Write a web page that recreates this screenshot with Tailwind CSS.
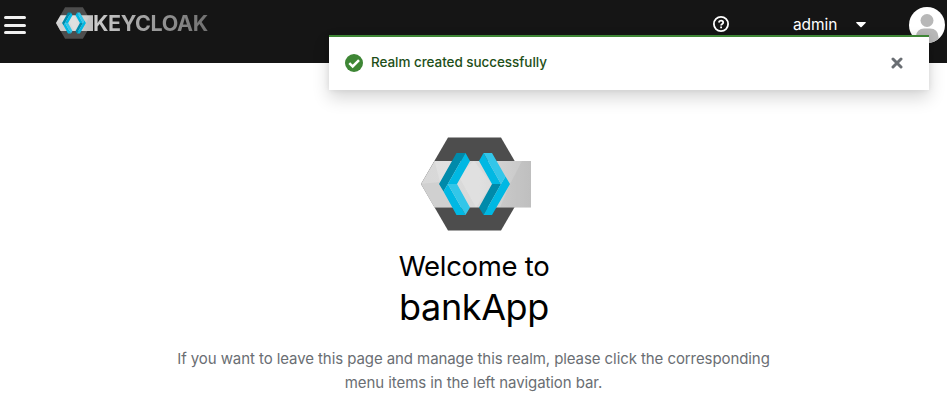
<!DOCTYPE html>
<html lang="en">
<head>
<meta charset="utf-8">
<title>Keycloak Administration Console</title>
<script src="https://cdn.jsdelivr.net/npm/@tailwindcss/browser@4"></script>
</head>
<body class="relative h-[412px] overflow-hidden bg-white font-['Inter',sans-serif]">
<svg class="absolute size-0">
  <defs>
    <linearGradient id="band" x1="0" x2="1"><stop offset="0" stop-color="#d8d8d8"/><stop offset=".5" stop-color="#dadada"/><stop offset="1" stop-color="#c6c6c6"/></linearGradient>
  </defs>
  <symbol id="emblem" viewBox="11 7 110 94">
    <path fill="#4d4d4d" d="M38 7.5H91L118 54 91 100.5H38L11 54Z"/>
    <path fill="url(#band)" d="M24.5 31H121V77.5H24.5L11 54Z"/>
    <path fill="#b8b8b8" fill-opacity=".25" d="M11 54 30 52 24.5 77.5ZM30 52 48 77.5H24.5Z"/>
    <path fill="#fff" fill-opacity=".18" d="M24.5 31H45L30 52ZM48 45 64 31 82 54 66 77.5Z"/>
    <path fill="#999" fill-opacity=".15" d="M100 54 121 60V77.5H90ZM112 31H121V60L100 54Z"/>
    <path fill="#008aaa" d="M46.5 23H55.5L33.5 61.5 29 54ZM82 54H91L73.5 85 69 77.5Z"/>
    <path fill="#00b8e3" d="M55.5 23 60 31 47 54H37.8ZM33.5 61.5 37.8 54 55.5 85H46.5ZM73.5 23 91 54H82L69 31ZM95.5 46.5 100 54 82 85H73.5L91 54Z"/>
    <path fill="#33c6e9" d="M37.8 54H47L60 77.5 55.5 85ZM73.5 23H82L95.5 46.5 91 54Z"/>
  </symbol>
</svg>

<header class="flex h-[63px] items-start bg-[#151515] text-white">
  <button class="mt-4 ml-1 flex w-[22px] flex-col gap-[4.5px]" aria-label="Menu">
    <span class="h-[3px] w-full rounded-xs bg-[#f0f0f0]"></span><span class="h-[3px] w-full rounded-xs bg-[#f0f0f0]"></span><span class="h-[3px] w-full rounded-xs bg-[#f0f0f0]"></span>
  </button>
  <div class="mt-[7px] ml-[30px] flex h-8 items-center">
    <svg class="h-8 w-[37px]"><use href="#emblem"/></svg>
    <span class="bg-linear-to-r from-[#cdcdcd] to-[#707070] bg-clip-text text-[21.5px] leading-8 font-bold tracking-[-0.4px] whitespace-nowrap text-transparent">KEYCLOAK</span>
  </div>
  <div class="mr-[2px] ml-auto flex h-[50px] items-center">
    <svg class="mr-16 mb-0.5 size-4" viewBox="0 0 16 16" fill="none" stroke="#fff" stroke-width="1.8"><circle cx="8" cy="8" r="7.1"/><path d="M5.8 6.5C6 5.2 7 4.7 8 4.7c1.2 0 2.2.7 2.2 1.8C10.2 8 8.1 7.8 8.1 9.4"/><path d="M8.1 10.4v1.8"/></svg>
    <span class="mr-[19px] w-[44px] text-[15.5px] tracking-[-0.1px] whitespace-nowrap">admin</span>
    <svg class="mr-[43px] h-[6px] w-[10px]" viewBox="0 0 10 6"><path fill="#fff" d="M.7 0H9.3Q10.3.3 9.6 1L5.6 5.1Q5 5.6 4.4 5.1L.4 1Q-.3.3.7 0Z"/></svg>
    <svg class="size-9" viewBox="0 0 36 36"><clipPath id="disc"><circle cx="18" cy="18" r="18"/></clipPath><g clip-path="url(#disc)"><path fill="#fff" d="M0 0H36V36H0Z"/><circle cx="18" cy="13.5" r="6.5" fill="#b8b8b8"/><path fill="#b8b8b8" d="M7 36V29Q8 21.5 15 21.5H21Q29 21.5 29.5 30V36Z"/></g></svg>
  </div>
</header>

<main class="flex flex-col items-center pt-[74px] text-center text-[#151515]">
  <svg class="ml-1 h-[94px] w-[110px]"><use href="#emblem"/></svg>
  <h1 class="mt-[17px] ml-[1px] text-[27.5px] leading-9 tracking-[-0.3px] text-black">Welcome to</h1>
  <h2 class="ml-[1px] text-[36px] leading-[47px] tracking-[-0.4px] text-black">bankApp</h2>
  <p class="mt-[16px] text-[15px] leading-6 tracking-[-0.08px] whitespace-nowrap text-[#6a6e73]">If you want to leave this page and manage this realm, please click the corresponding<br>menu items in the left navigation bar.</p>
</main>

<div class="absolute top-[35px] left-[329px] flex h-[55px] w-[600px] items-center border-t-2 border-[#3e8635] bg-white pr-[26px] pb-[2px] pl-4 shadow-[0_8px_16px_rgba(3,3,3,0.16),0_0_6px_rgba(3,3,3,0.08)]">
  <svg class="size-[18px]" viewBox="0 0 18 18"><circle cx="9" cy="9" r="9" fill="#3e8635"/><path d="M4.3 9.2 7.7 12.5 14 6.2" fill="none" stroke="#fff" stroke-width="2.5"/></svg>
  <span class="ml-2 text-[13.5px] font-medium tracking-[-0.06px] whitespace-nowrap text-[#1e4f18]">Realm created successfully</span>
  <svg class="ml-auto size-3" viewBox="0 0 12 12"><path d="M2 2 10 10M10 2 2 10" stroke="#6a6e73" stroke-width="3" stroke-linecap="round"/></svg>
</div>
</body>
</html>
